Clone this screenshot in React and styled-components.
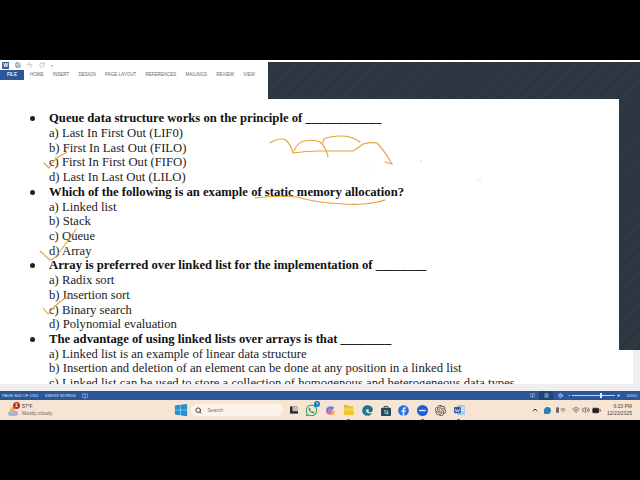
import React from "react";
import styled, { createGlobalStyle } from "styled-components";
import { FaWindows, FaWhatsapp, FaFacebook, FaEdge } from "react-icons/fa";
import { SiOpenai } from "react-icons/si";
import { ChevronUp, Wifi, Volume2, BatteryFull, Search, BookOpen, FileText, Globe, Undo2, RotateCw, Save } from "lucide-react";

const tabs = ["HOME", "INSERT", "DESIGN", "PAGE LAYOUT", "REFERENCES", "MAILINGS", "REVIEW", "VIEW"];

const questions = [
  {
    title: "Queue data structure works on the principle of ____________",
    options: ["a) Last In First Out (LIF0)", "b) First In Last Out (FILO)", "c) First In First Out (FIFO)", "d) Last In Last Out (LILO)"],
  },
  {
    title: "Which of the following is an example of static memory allocation?",
    options: ["a) Linked list", "b) Stack", "c) Queue", "d) Array"],
  },
  {
    title: "Array is preferred over linked list for the implementation of ________",
    options: ["a) Radix sort", "b) Insertion sort", "c) Binary search", "d) Polynomial evaluation"],
  },
  {
    title: "The advantage of using linked lists over arrays is that ________",
    options: [
      "a) Linked list is an example of linear data structure",
      "b) Insertion and deletion of an element can be done at any position in a linked list",
      "c) Linked list can be used to store a collection of homogenous and heterogeneous data types",
    ],
  },
];

const App = () => {
  return (
    <>
      <GlobalStyle />
      <TopBlack />
      <Window>
        <Header>
          <RibbonLeft>
            <QuickBar>
              <WordBadge>W</WordBadge>
              <Save size={6} color="#44546f" />
              <Undo2 size={6} color="#8a93a3" />
              <RotateCw size={6} color="#8a93a3" />
              <Caret>▾</Caret>
            </QuickBar>
            <TabRow>
              <FileTab>FILE</FileTab>
              {tabs.map((tab) => (
                <Tab key={tab}>{tab}</Tab>
              ))}
            </TabRow>
          </RibbonLeft>
          <DarkBand />
        </Header>
        <Body>
          <Sheet>
            {questions.map((q) => (
              <Question key={q.title}>
                <Bullet />
                <div>
                  <Title>{q.title}</Title>
                  {q.options.map((o) => (
                    <Option key={o}>{o}</Option>
                  ))}
                </div>
              </Question>
            ))}
          </Sheet>
          <RightSide>
            <DarkStrip />
            <RightRest />
          </RightSide>
          <Ink width="640" height="285" viewBox="0 99 640 285">
            <g fill="none" stroke="#e8a038" strokeWidth="1.1" strokeLinecap="round" strokeLinejoin="round">
              <path d="M270 143Q279 137 286 140Q291 145 293 153" />
              <path d="M294 151Q297 143 304 141Q314 139 320 142Q326 147 328 157" />
              <path d="M323 143Q322 138 330 137Q342 135 350 137Q356 139 360 142" />
              <path d="M293 153Q306 151 318 151L353 151Q358 148 363 144Q371 142 377 143Q384 150 392 164" />
              <path d="M385 162L392 164" />
              <path d="M44 163L49 168Q52 162 58 157L67 152" />
              <path d="M255 198Q276 195 297 197Q315 202 330 203Q350 205 363 204Q376 203 385 200" />
              <path d="M40 251L50 260Q53 260 57 255Q67 243 76 229" />
              <path d="M43 308L48 314Q50 312 53 308Q60 301 70 295" />
            </g>
            <g fill="#999">
              <circle cx="421" cy="161" r=".5" />
              <circle cx="368" cy="168" r=".5" />
              <circle cx="480" cy="179" r=".5" />
              <circle cx="477" cy="181" r=".4" />
            </g>
          </Ink>
          <Pointer width="5" height="7" viewBox="0 0 5 7">
            <path d="M0 0L4.5 4.5H2.5L3.5 7H2L1 5L0 6Z" fill="#fff" stroke="#555" strokeWidth="0.3" />
          </Pointer>
        </Body>
        <BottomGap />
        <StatusBar>
          <StatusText>PAGE 846 OF 1161</StatusText>
          <StatusText>338093 WORDS</StatusText>
          <BookOpen size={6} color="#b9cbe4" />
          <ViewButtons>
            <ViewButton><BookOpen size={5} color="#d5e0f0" /></ViewButton>
            <ViewButton $active><FileText size={5} color="#d5e0f0" /></ViewButton>
            <ViewButton><Globe size={5} color="#d5e0f0" /></ViewButton>
          </ViewButtons>
          <Zoom>
            <span>-</span>
            <ZoomTrack>
              <ZoomThumb />
            </ZoomTrack>
            <span>+</span>
          </Zoom>
          <StatusText>100%</StatusText>
        </StatusBar>
        <Taskbar>
          <Weather>
            <Cloud>
              <Sun />
              <Alert>1</Alert>
            </Cloud>
            <WeatherText>
              <span>57°F</span>
              <span>Mostly cloudy</span>
            </WeatherText>
          </Weather>
          <Slot><FaWindows size={14} color="#1f8fd8" /></Slot>
          <SearchPill>
            <Search size={7} color="#333" strokeWidth={3} />
            <span>Search</span>
          </SearchPill>
          <Slot $ml="1px">
            <svg width="8" height="8" viewBox="0 0 10 9">
              <rect width="10" height="9" fill="#2b2b2b" />
              <path d="M3 0H10V6H3Z" fill="#f2f2f2" opacity=".75" />
            </svg>
          </Slot>
          <Slot>
            <FaWhatsapp size={13} color="#1f9e58" />
            <CountBadge>9</CountBadge>
          </Slot>
          <Slot>
            <svg width="11" height="11" viewBox="0 0 12 12">
              <path d="M6 1L10 2.5L8 6L4 5Z" fill="#4b8ee8" />
              <path d="M4 5L8 6L6 11L2 9.5Z" fill="#e46aa0" />
              <path d="M8 6L11 7L9 10.5L6 11Z" fill="#f3a64a" />
              <path d="M2 3L6 1L4 5L2 9.5L1 6Z" fill="#7d6ee0" />
            </svg>
          </Slot>
          <Slot>
            <svg width="11" height="12" viewBox="0 0 12 13">
              <path d="M1 1H5L6 2.5H11V5H1Z" fill="#e2b93b" />
              <rect x="1" y="4" width="10.5" height="8" fill="#f5cf3f" />
              <rect x="1" y="8" width="10.5" height="4" fill="#f0c22e" />
            </svg>
            <RunDot />
          </Slot>
          <Slot><FaEdge size={11} color="#16728f" /></Slot>
          <Slot>
            <svg width="10" height="11" viewBox="0 0 11 12">
              <path d="M3.5 3V1.5H7.5V3" fill="none" stroke="#23465c" />
              <rect y="3" width="11" height="9" rx="1" fill="#1c4a66" />
              <rect x="3.5" y="5.5" width="2" height="2" fill="#d9a13a" />
              <rect x="6" y="5.5" width="2" height="2" fill="#66b04c" />
              <rect x="3.5" y="8" width="2" height="2" fill="#3a9bd9" />
              <rect x="6" y="8" width="2" height="2" fill="#e0e0e0" />
            </svg>
          </Slot>
          <Slot><FaFacebook size={11} color="#1b74e4" /></Slot>
          <Slot>
            <svg width="11" height="11" viewBox="0 0 13 13">
              <circle cx="6.5" cy="6.5" r="6.5" fill="#1a5fd6" />
              <rect x="2.5" y="5.7" width="8" height="1.6" rx=".8" fill="#dfe9fb" />
            </svg>
            <RunDot />
          </Slot>
          <Slot><SiOpenai size={11} color="#444" /></Slot>
          <Slot>
            <svg width="11" height="10" viewBox="0 0 13 12">
              <rect x="4" y="0" width="9" height="12" rx="1" fill="#a9c4ea" />
              <rect x="8" y="3" width="4" height="1.2" fill="#fff" />
              <rect x="8" y="6" width="4" height="1.2" fill="#fff" />
              <rect x="0" y="2.5" width="8" height="7.5" rx="1" fill="#2b579a" />
              <path d="M1.5 4.5L2.7 8.5L4 5.5L5.3 8.5L6.5 4.5" fill="none" stroke="#fff" strokeWidth=".8" />
            </svg>
            <RunDot />
          </Slot>
          <Tray>
            <ChevronUp size={8} color="#333" strokeWidth={3} />
            <TrayGap $w="5px" />
            <Shield />
            <TrayGap $w="5px" />
            <Mic>
              <MicHead />
              <Wifi size={6} color="#555" />
            </Mic>
            <TrayGap $w="6px" />
            <Wifi size={8} color="#666" strokeWidth={2.5} />
            <TrayGap $w="2px" />
            <Volume2 size={8} color="#666" strokeWidth={2.5} />
            <TrayGap $w="2px" />
            <BatteryFull size={9} color="#222" fill="#222" />
            <Clock>
              <span>6:33 PM</span>
              <span>12/23/2025</span>
            </Clock>
          </Tray>
        </Taskbar>
      </Window>
    </>
  );
};

const GlobalStyle = createGlobalStyle`
  html, body {
    margin: 0;
    height: 100%;
    background: #000;
    overflow: hidden;
  }
  * {
    box-sizing: border-box;
  }
`;

const TopBlack = styled.div`
  height: 60px;
  background: #000;
`;

const Window = styled.div`
  width: 640px;
  height: 360px;
  display: flex;
  flex-direction: column;
  background: #fff;
`;

const Header = styled.div`
  height: 39px;
  display: flex;
`;

const RibbonLeft = styled.div`
  width: 268px;
  flex: none;
  display: flex;
  flex-direction: column;
`;

const QuickBar = styled.div`
  height: 10px;
  display: flex;
  align-items: center;
  gap: 6px;
  padding-left: 2px;
`;

const WordBadge = styled.div`
  width: 7px;
  height: 7px;
  background: #3c5f93;
  color: #fff;
  font: bold 5px "Liberation Sans", sans-serif;
  text-align: center;
  line-height: 7px;
`;

const Caret = styled.span`
  font: 4px "Liberation Sans", sans-serif;
  color: #999;
`;

const TabRow = styled.div`
  height: 10px;
  display: flex;
  align-items: center;
`;

const FileTab = styled.div`
  flex: none;
  width: 24px;
  height: 10px;
  margin-right: 6px;
  background: #2b579a;
  color: #eef;
  font: bold 4.6px/10px "Liberation Sans", sans-serif;
  text-align: center;
`;

const Tab = styled.div`
  flex: none;
  margin-right: 9.3px;
  color: #666;
  font: 4.5px/10px "Liberation Sans", sans-serif;
  white-space: nowrap;
`;

const darkWeave = `
  background-color: #2c3742;
  background-image: repeating-linear-gradient(135deg, #29333d 0 1px, #303b46 1px 2px);
`;

const DarkBand = styled.div`
  flex: 1;
  margin-top: 2px;
  ${darkWeave}
`;

const Body = styled.div`
  position: relative;
  height: 285px;
  display: flex;
  overflow: hidden;
`;

const Sheet = styled.div`
  flex: 1;
  padding: 12.2px 0 0 30px;
  font-family: "Liberation Serif", "Times New Roman", serif;
  font-size: 12.67px;
  line-height: 14.72px;
  color: #222;
  white-space: nowrap;
  overflow: hidden;
`;

const Question = styled.div`
  display: flex;
`;

const Bullet = styled.div`
  width: 5px;
  height: 5px;
  margin: 5px 14px 0 0;
  border-radius: 50%;
  background: #222;
  flex: none;
`;

const Title = styled.div`
  font-weight: bold;
  color: #111;
`;

const Option = styled.div``;

const RightSide = styled.div`
  width: 21px;
  flex: none;
  display: flex;
  flex-direction: column;
`;

const DarkStrip = styled.div`
  height: 251px;
  ${darkWeave}
`;

const RightRest = styled.div`
  flex: 1;
  border-right: 7px solid #efefef;
`;

const Ink = styled.svg`
  position: absolute;
  left: 0;
  top: 0;
`;

const Pointer = styled.svg`
  position: absolute;
  left: 619px;
  top: -7px;
`;

const BottomGap = styled.div`
  height: 7px;
  background: #efefef;
`;

const StatusBar = styled.div`
  height: 9px;
  display: flex;
  align-items: center;
  gap: 6px;
  padding: 0 3px 0 2px;
  background: #2b579a;
`;

const StatusText = styled.span`
  color: #d5e0f0;
  font: 4.2px "Liberation Sans", sans-serif;
  white-space: nowrap;
`;

const ViewButtons = styled.div`
  margin: 0 -5px 0 auto;
  display: flex;
`;

const ViewButton = styled.div`
  width: 14px;
  height: 9px;
  display: flex;
  align-items: center;
  justify-content: center;
  background: ${(p) => (p.$active ? "#1f4478" : "transparent")};
`;

const Zoom = styled.div`
  width: 52px;
  display: flex;
  align-items: center;
  gap: 2px;
  color: #e6edf7;
  font: bold 6px/9px "Liberation Sans", sans-serif;
`;

const ZoomTrack = styled.div`
  position: relative;
  flex: 1;
  height: 1px;
  background: #c9d6ea;
`;

const ZoomThumb = styled.div`
  position: absolute;
  left: 28px;
  top: -2px;
  width: 1.5px;
  height: 5px;
  background: #eef3fa;
`;

const Taskbar = styled.div`
  height: 20px;
  display: flex;
  align-items: center;
  background: #f8e4d3;
`;

const Weather = styled.div`
  width: 172px;
  flex: none;
  display: flex;
  align-items: center;
  gap: 3px;
  padding-left: 8px;
`;

const Cloud = styled.div`
  position: relative;
  width: 10px;
  height: 5px;
  margin-top: 6px;
  border-radius: 3px;
  background: #a8b6cd;
`;

const Sun = styled.div`
  position: absolute;
  left: 2px;
  top: -4px;
  width: 5px;
  height: 5px;
  border-radius: 50%;
  background: #e8b35a;
`;

const Alert = styled.div`
  position: absolute;
  left: 5px;
  top: -9px;
  width: 7px;
  height: 7px;
  border-radius: 50%;
  background: #c22b2b;
  color: #fff;
  font: bold 5px/7px "Liberation Sans", sans-serif;
  text-align: center;
`;

const WeatherText = styled.div`
  display: flex;
  flex-direction: column;
  margin-left: 1px;
  color: #666;
  font: 5px/7px "Liberation Sans", sans-serif;
  span:first-child {
    color: #333;
  }
`;

const Slot = styled.div`
  position: relative;
  width: 18.4px;
  height: 20px;
  margin-left: ${(p) => p.$ml || "0"};
  display: flex;
  align-items: center;
  justify-content: center;
  flex: none;
`;

const SearchPill = styled.div`
  width: 92px;
  height: 12px;
  margin-left: 1px;
  padding-left: 4px;
  display: flex;
  align-items: center;
  gap: 5px;
  border-radius: 6px;
  background: #fdf3ea;
  color: #777;
  font: 5px "Liberation Sans", sans-serif;
`;

const CountBadge = styled.div`
  position: absolute;
  right: 1px;
  top: 1px;
  width: 6px;
  height: 6px;
  border-radius: 50%;
  background: #1a6fd0;
  color: #fff;
  font: 4px/6px "Liberation Sans", sans-serif;
  text-align: center;
`;

const RunDot = styled.div`
  position: absolute;
  left: 7.5px;
  bottom: 0;
  width: 3px;
  height: 1px;
  background: #777;
`;

const Tray = styled.div`
  margin-left: auto;
  display: flex;
  align-items: center;
  padding-right: 8px;
`;

const TrayGap = styled.div`
  width: ${(p) => p.$w};
`;

const Shield = styled.div`
  width: 7px;
  height: 7px;
  border-radius: 50% 50% 50% 10%;
  background: #2a7fb8;
`;

const Mic = styled.div`
  display: flex;
  align-items: center;
  gap: 1px;
`;

const MicHead = styled.div`
  width: 3px;
  height: 6px;
  border-radius: 2px;
  background: #667;
`;

const Clock = styled.div`
  margin-left: 6px;
  display: flex;
  flex-direction: column;
  align-items: flex-end;
  color: #444;
  font: 5px/7px "Liberation Sans", sans-serif;
`;

export default App;
